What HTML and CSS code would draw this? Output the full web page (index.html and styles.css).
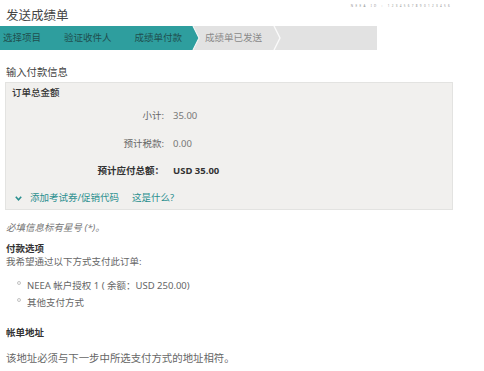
FILE: index.html
```html
<!DOCTYPE html>
<html lang="zh-CN">
<head>
<meta charset="utf-8">
<title>发送成绩单</title>
<link rel="stylesheet" href="styles.css">
</head>
<body>
<div class="topstrip"><span class="topstrip-text">NEEA ID : 1234567890123456</span></div>
<h1 class="page-title">发送成绩单</h1>
<nav class="steps">
  <div class="steps-done">
    <span class="step">选择项目</span>
    <span class="step">验证收件人</span>
    <span class="step">成绩单付款</span>
  </div>
  <svg class="arrow" width="9" height="24" viewBox="0 0 9 24"><polygon points="0,0 1,0 7,12 1,24 0,24" fill="#2e9e9e"/><polyline points="1,0 7,12 1,24" fill="none" stroke="#f4f4f4" stroke-width="1.2"/></svg>
  <span class="step step-todo">成绩单已发送</span>
  <svg class="chev" width="8" height="24" viewBox="0 0 8 24"><polyline points="1,0 7,12 1,24" fill="none" stroke="#fafafa" stroke-width="1.4"/></svg>
  <span class="steps-fill"></span>
</nav>

<h2 class="section-title">输入付款信息</h2>
<section class="order-box">
  <h3 class="order-title">订单总金额</h3>
  <div class="order-grid">
    <span class="lbl">小计:</span><span class="val">35.00</span>
    <span class="lbl">预计税款:</span><span class="val">0.00</span>
    <span class="lbl lbl-strong">预计应付总额：</span><span class="val val-strong">USD 35.00</span>
  </div>
  <div class="coupon">
    <a class="link" href="#"><svg class="down" width="7" height="5" viewBox="0 0 7 5"><polyline points="0.8,0.8 3.5,3.8 6.2,0.8" fill="none" stroke="#2a8f8f" stroke-width="1.6"/></svg>添加考试券/促销代码</a>
    <a class="link" href="#">这是什么?</a>
  </div>
</section>

<p class="required">必填信息标有星号 (*)。</p>
<h4 class="sub-title">付款选项</h4>
<p class="text">我希望通过以下方式支付此订单:</p>
<ul class="radios">
  <li class="radio"><span class="circle"></span>NEEA 帐户授权 1 ( 余额：USD 250.00)</li>
  <li class="radio"><span class="circle"></span>其他支付方式</li>
</ul>
<h4 class="sub-title billing">帐单地址</h4>
<p class="note">该地址必须与下一步中所选支付方式的地址相符。</p>
</body>
</html>
```

FILE: styles.css
```css
* { box-sizing: border-box; }
html, body { margin: 0; padding: 0; background: #fff; }
body {
  font-family: "Noto Sans", "Noto Sans CJK SC", sans-serif;
  font-size: 9.5px;
  color: #555;
  width: 484px;
  padding-top: 4px;
}
h1, h2, h3, h4, p, ul { margin: 0; padding: 0; font-weight: normal; }

.topstrip {
  height: 4px;
  display: flex;
  justify-content: flex-end;
  align-items: center;
  padding-right: 32px;
}
.topstrip-text {
  font-size: 3px;
  line-height: 4px;
  color: #8f8f8f;
  letter-spacing: 2.3px;
  white-space: nowrap;
}

.page-title {
  margin-top: 0;
  padding-left: 6px;
  font-size: 12.5px;
  line-height: 16px;
  color: #444;
}

.steps {
  margin-top: 2px;
  width: 377px;
  height: 24px;
  display: flex;
  align-items: center;
  background: #e2e2e2;
}
.steps-done {
  width: 192px;
  height: 24px;
  background: #2e9e9e;
  display: flex;
  align-items: center;
  gap: 23px;
  padding-left: 3px;
}
.step {
  font-size: 9.5px;
  line-height: 24px;
  color: #1f4f4e;
  white-space: nowrap;
}
.arrow { display: block; flex: none; }
.step-todo { color: #8a8a8a; margin-left: 4px; }
.chev { display: block; flex: none; margin-left: 11px; }
.steps-fill { flex: 1; }

.section-title {
  margin-top: 15px;
  padding-left: 6px;
  font-size: 10.3px;
  line-height: 14px;
  color: #444;
}

.order-box {
  margin: 3px 0 0 5px;
  width: 448px;
  background: #f1f0ee;
  border: 1px solid #e3e3e1;
  padding: 3px 6px 4px 6px;
}
.order-title {
  font-size: 9.5px;
  line-height: 14px;
  color: #333;
  font-weight: 500;
}
.order-grid {
  margin-top: 9px;
  display: grid;
  grid-template-columns: 152px auto;
  column-gap: 9px;
  row-gap: 13.5px;
  line-height: 14px;
}
.lbl { text-align: right; color: #666; }
.val { color: #777; }
.lbl-strong { color: #333; font-weight: 700; }
.val-strong { color: #333; font-weight: 700; }

.coupon {
  margin-top: 13px;
  display: flex;
  gap: 13px;
  line-height: 14px;
}
.link {
  color: #2a8f8f;
  text-decoration: none;
  display: flex;
  align-items: center;
}
.down { display: block; margin: 0 8px 0 3px; }

.required {
  margin-top: 11px;
  padding-left: 6px;
  line-height: 14px;
  font-style: italic;
  color: #777;
}
.sub-title {
  margin-top: 7px;
  padding-left: 6px;
  line-height: 13px;
  color: #333;
  font-weight: 700;
}
.text {
  padding-left: 6px;
  line-height: 14px;
  color: #666;
}
.radios {
  list-style: none;
  margin-top: 10px;
  padding-left: 17px;
  display: flex;
  flex-direction: column;
  gap: 3px;
}
.radio {
  display: flex;
  align-items: flex-start;
  line-height: 14px;
  color: #666;
}
.circle {
  flex: none;
  width: 4px;
  height: 4px;
  margin: 2px 6px 0 0;
  border: 1px solid #c4c4c4;
  border-radius: 50%;
  background: #fafafa;
}
.billing { margin-top: 16px; line-height: 14px; }
.note {
  margin-top: 11px;
  padding-left: 6px;
  font-size: 10.4px;
  line-height: 14px;
  color: #666;
}
```
